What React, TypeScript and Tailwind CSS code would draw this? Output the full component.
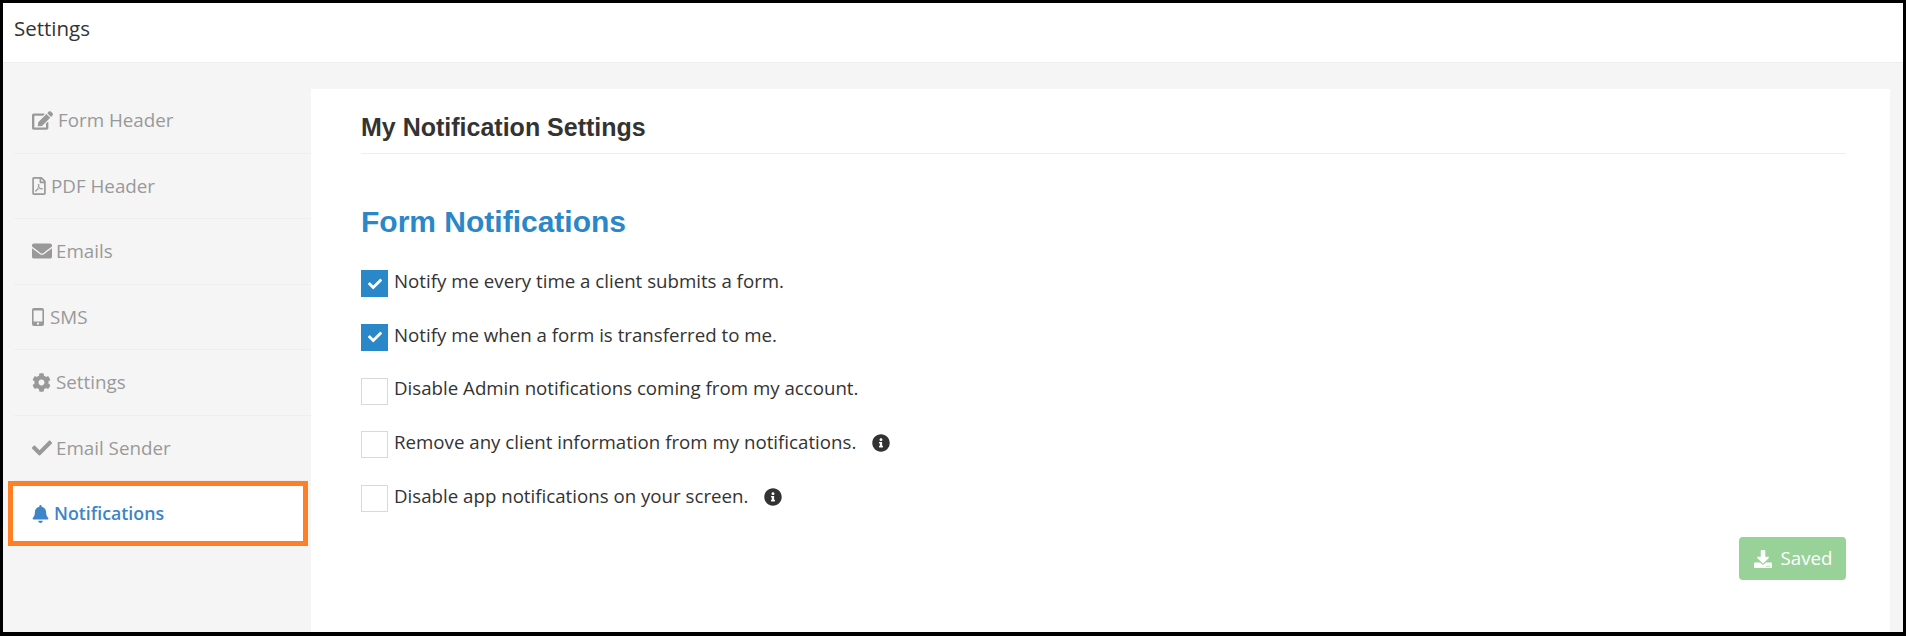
import { FaEdit, FaRegFilePdf, FaEnvelope, FaCog, FaCheck, FaBell, FaInfoCircle, FaDownload } from "react-icons/fa";
import { ReactNode } from "react";

const MobileIcon = () => (
  <svg viewBox="0 0 12 18" className="h-[18px] w-[12px] fill-current">
    <path d="M2 0h8a2 2 0 0 1 2 2v14a2 2 0 0 1-2 2H2a2 2 0 0 1-2-2V2a2 2 0 0 1 2-2zm-.4 2.6v10.8h8.8V2.6H1.600zM6 14.400a1.200 1.200 0 1 0 0 2.400 1.200 1.200 0 0 0 0-2.400z" fillRule="evenodd" />
  </svg>
);

const navItems: { label: string; icon: ReactNode; gap: string }[] = [
  { label: "Form Header", icon: <FaEdit className="h-[19px] w-[21px]" />, gap: "gap-[5px]" },
  { label: "PDF Header", icon: <FaRegFilePdf className="h-[18px] w-[14px]" />, gap: "gap-[5px]" },
  { label: "Emails", icon: <FaEnvelope className="h-[20px] w-[20px]" />, gap: "gap-[4px]" },
  { label: "SMS", icon: <MobileIcon />, gap: "gap-[6px]" },
  { label: "Settings", icon: <FaCog className="h-[19px] w-[19px]" />, gap: "gap-[5px]" },
  { label: "Email Sender", icon: <FaCheck className="h-[20px] w-[20px]" />, gap: "gap-[4px]" },
];

const options = [
  { label: "Notify me every time a client submits a form.", checked: true },
  { label: "Notify me when a form is transferred to me.", checked: true },
  { label: "Disable Admin notifications coming from my account.", checked: false },
  { label: "Remove any client information from my notifications.", checked: false, info: true },
  { label: "Disable app notifications on your screen.", checked: false, info: true },
];

const App = () => {
  return (
    <div className="h-[636px] w-[1906px] overflow-hidden border-[3px] border-b-4 border-black bg-white font-['Open_Sans',sans-serif]">
      {/* Title bar */}
      <div className="flex h-[60px] items-center border-b border-[#eeeeee] pb-[8px] pl-[11px] text-[20.5px] text-[#333333]">
        Settings
      </div>

      <div className="flex h-[569px] bg-[#f5f5f5] pr-[13px] pt-[25px]">
        {/* Sidebar */}
        <nav className="w-[308px] shrink-0 pl-[11px] text-[18.8px] text-[#999999]">
          {navItems.map((item) => (
            <div key={item.label} className={`flex h-[65.5px] items-center border-b border-[#eeeeee] pl-[18px] ${item.gap}`}>
              {item.icon}
              <span>{item.label}</span>
            </div>
          ))}
          <div className="-ml-[6px] mr-[3px] flex h-[65px] items-center gap-[5px] border-[5px] border-[#ff7f27] bg-white pl-[19px] text-[17.8px] font-semibold text-[#3d85c6]">
            <FaBell className="h-[18px] w-[17px]" />
            <span>Notifications</span>
          </div>
        </nav>

        {/* Main panel */}
        <main className="mt-[1px] flex-1 bg-white pl-[50px] pr-[44px]">
          <div className="flex h-[65px] items-center border-b border-[#eeeeee] pt-[14px] font-['Liberation_Sans',sans-serif] text-[25px] font-bold text-[#333333]">
            My Notification Settings
          </div>
          <h2 className="mt-[48px] font-['Liberation_Sans',sans-serif] text-[30px] font-bold leading-[40px] text-[#2a88c8]">
            Form Notifications
          </h2>
          <ul className="mt-[28px] flex flex-col gap-[26.75px]">
            {options.map((opt) => (
              <li key={opt.label} className="flex h-[27px] items-center text-[18.7px] text-[#333333]">
                {opt.checked ? (
                  <span className="flex h-[27px] w-[27px] items-center justify-center bg-[#2a88c8] text-white">
                    <FaCheck className="h-[14px] w-[14px]" />
                  </span>
                ) : (
                  <span className="h-[27px] w-[27px] border border-[#d9d9d6] bg-white" />
                )}
                <span className="ml-[6px] pb-[5px]">{opt.label}</span>
                {opt.info && <FaInfoCircle className="-mt-[3px] ml-[16px] h-[18px] w-[18px]" />}
              </li>
            ))}
          </ul>
          <div className="mt-[25px] flex justify-end">
            <button className="flex h-[43px] w-[107px] items-center justify-center gap-[9px] rounded-[4px] bg-[#98d298] pl-[1px] text-[18.7px] text-white">
              <FaDownload className="h-[18px] w-[18px]" />
              Saved
            </button>
          </div>
        </main>
      </div>
    </div>
  );
};

export default App;
